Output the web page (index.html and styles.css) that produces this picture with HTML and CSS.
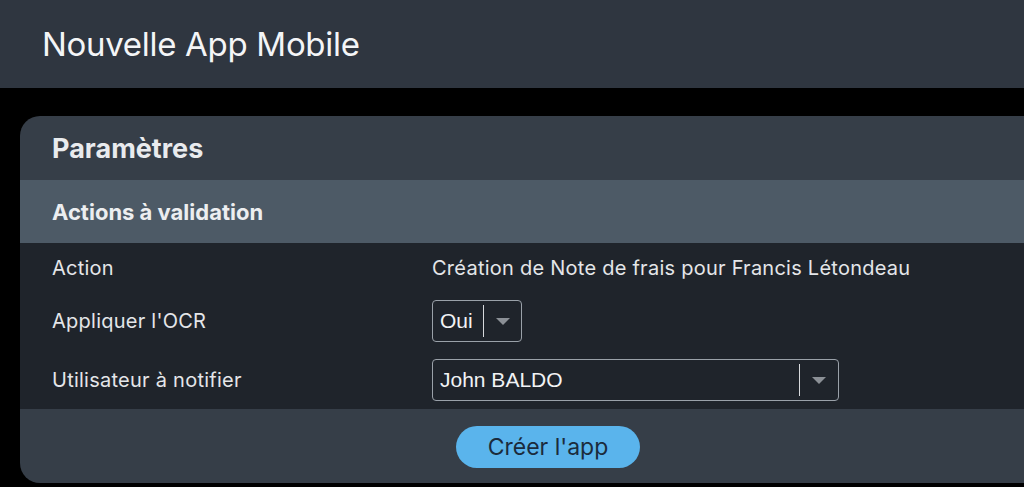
FILE: index.html
```html
<!DOCTYPE html>
<html lang="fr">
<head>
    <meta charset="UTF-8">
    <meta name="viewport" content="width=device-width, initial-scale=1.0">
    <title>Nouvelle App Mobile</title>
    <link rel="stylesheet" href="styles.css">
</head>
<body>
    <header class="top-bar">
        <h1>Nouvelle App Mobile</h1>
    </header>

    <main class="content">
        <section class="card">
            <h2 class="card-title">Paramètres</h2>
            <h3 class="section-title">Actions à validation</h3>
            <div class="rows">
                <div class="row">
                    <span class="label">Action</span>
                    <span class="value">Création de Note de frais pour Francis Létondeau</span>
                </div>
                <div class="row">
                    <span class="label">Appliquer l'OCR</span>
                    <div class="select select-small">
                        <span class="select-text">Oui</span>
                        <span class="select-sep"></span>
                        <span class="select-arrow"></span>
                    </div>
                </div>
                <div class="row">
                    <span class="label">Utilisateur à notifier</span>
                    <div class="select select-wide">
                        <span class="select-text">John BALDO</span>
                        <span class="select-sep"></span>
                        <span class="select-arrow"></span>
                    </div>
                </div>
            </div>
            <div class="card-footer">
                <button class="btn-create" type="button">Créer l'app</button>
            </div>
        </section>
    </main>
</body>
</html>
```

FILE: styles.css
```css
body {
    margin: 0;
    background-color: #000;
    font-family: Inter, "Noto Sans", sans-serif;
    color: #e8eaed;
}

.top-bar {
    background-color: #2f3640;
    height: 88px;
    display: flex;
    align-items: center;
    padding-left: 42px;
}

.top-bar h1 {
    margin: 0;
    font-size: 33px;
    font-weight: 400;
    color: #f4f5f7;
    letter-spacing: -0.3px;
}

.content {
    padding: 28px 0 0 20px;
}

.card {
    background-color: #363e48;
    border-radius: 20px 0 0 20px;
    overflow: hidden;
}

.card-title {
    margin: 0;
    height: 64px;
    display: flex;
    align-items: center;
    padding-left: 32px;
    font-size: 27px;
    font-weight: 700;
    color: #e9ebee;
}

.section-title {
    margin: 0;
    height: 63px;
    display: flex;
    align-items: center;
    padding-left: 32px;
    background-color: #4d5a66;
    font-size: 22px;
    font-weight: 700;
    color: #eceef0;
}

.rows {
    background-color: #1f242b;
    padding: 6px 0 8px;
}

.row {
    display: grid;
    grid-template-columns: 380px 1fr;
    align-items: center;
    min-height: 38px;
    padding-left: 32px;
}

.row:nth-child(1) {
    margin-bottom: 13px;
}

.row:nth-child(2) {
    margin-bottom: 17px;
}

.label, .value {
    font-size: 20px;
    letter-spacing: 0.25px;
    color: #e4e6e9;
}

.select {
    display: flex;
    align-items: center;
    height: 42px;
    border: 1px solid #9aa1a9;
    border-radius: 4px;
    box-sizing: border-box;
    font-family: "Liberation Sans", Arial, sans-serif;
    font-size: 21px;
    color: #f2f3f5;
}

.select-small {
    width: 90px;
}

.select-wide {
    width: 407px;
}

.select-text {
    flex: 1;
    padding-left: 7px;
}

.select-small .select-text {
    flex: none;
    width: 43px;
}

.select-sep {
    flex-shrink: 0;
    width: 1px;
    height: 32px;
    background-color: #d6d9dc;
}

.select-arrow {
    flex-shrink: 0;
    width: 0;
    height: 0;
    margin: 0 12px 0 12px;
    border-left: 7px solid transparent;
    border-right: 7px solid transparent;
    border-top: 7px solid #8b9096;
}

.card-footer {
    display: flex;
    justify-content: center;
    padding: 17px 0 15px 52px;
}

.btn-create {
    width: 184px;
    height: 42px;
    border: none;
    border-radius: 21px;
    background-color: #5ab4ec;
    color: #1b2b3c;
    font-family: Inter, "Noto Sans", sans-serif;
    font-size: 23px;
    cursor: pointer;
}
```
